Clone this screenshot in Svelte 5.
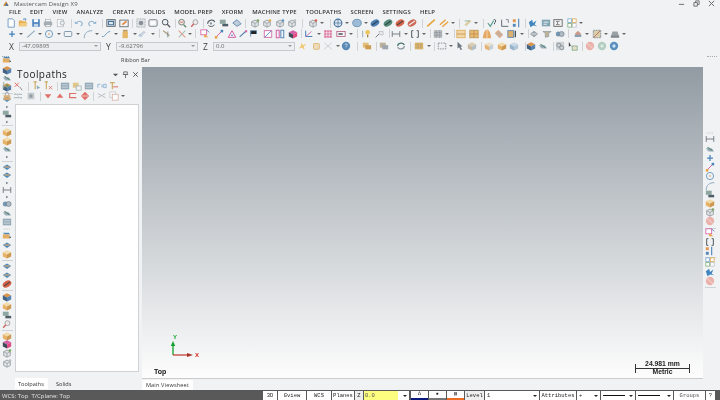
<script>
  // small icon helpers, all drawn on a 12x12 box
  const cube = (t, l, r) =>
    `<path d="M6 1.5 11 4 6 6.5 1 4z" fill="${t}"/><path d="M1 4 6 6.5V11.5L1 9z" fill="${l}"/><path d="M11 4 6 6.5V11.5L11 9z" fill="${r}"/>`;
  const wire = (c) =>
    `<path d="M2 4.5 6 2.5 10 4.5V9L6 11 2 9z" fill="#dfe3e6" stroke="#6d767c" stroke-width=".8"/><path d="M2 4.5 6 6.5 10 4.5M6 6.5V11" fill="none" stroke="#6d767c" stroke-width=".7"/><circle cx="9.5" cy="3" r="1.6" fill="${c}"/>`;
  const disk = (a, b) =>
    `<ellipse cx="6" cy="6" rx="5.5" ry="3.8" transform="rotate(-28 6 6)" fill="${a}"/><path d="M2.5 8.5 9.5 3.5" stroke="${b}" stroke-width="1.4"/>`;
  const ln = (c, w = 1.2) => `fill="none" stroke="${c}" stroke-width="${w}"`;

  const icons = {
    doc: `<path d="M2.5 1H8L10 3V11H2.5z" fill="#fff" stroke="#4d7fae"/>`,
    folder: `<path d="M1 3H5L6 4H10V10H1z" fill="#e4a83c"/><path d="M3 6H11.5L10 10H1z" fill="#f2c66d"/><path d="M6 1.5 9.5 1 9 3" ${ln("#3f77ad")}/>`,
    save: `<rect x="1.5" y="1.5" width="9" height="9" fill="#2f6fb5"/><rect x="3.5" y="1.5" width="5" height="3.5" fill="#fff"/><rect x="3.5" y="7" width="5" height="3.5" fill="#bcd3e8"/>`,
    print: `<rect x="3" y="1.5" width="6" height="3" fill="#fff" stroke="#8b9399" stroke-width=".7"/><rect x="1" y="4.5" width="10" height="4.5" fill="#9aa2a8"/><rect x="3" y="8" width="6" height="2.5" fill="#eee" stroke="#8b9399" stroke-width=".7"/>`,
    prev: `<rect x="1.5" y="2" width="7.5" height="8.5" fill="#fafafa" stroke="#a7adb2" stroke-width=".8"/><circle cx="7.5" cy="6" r="2.5" fill="#e8eef2" stroke="#8f979d" stroke-width=".9"/>`,
    undo: `<path d="M3 6.5C4 3 9 3 10 6.5 10 8 9 9 8 9.5" ${ln("#7ba4c7", 1.3)}/><path d="M1 4 5 7H1z" fill="#7ba4c7"/>`,
    redo: `<path d="M9 6.5C8 3 3 3 2 6.5 2 8 3 9 4 9.5" ${ln("#7ba4c7", 1.3)}/><path d="M11 4 7 7H11z" fill="#7ba4c7"/>`,
    fit: `<rect x="1" y="2" width="10" height="8" fill="#dfe7ee" stroke="#333c46"/><path d="M3 4H9V8H3z" ${ln("#27608f", 1.3)}/>`,
    fit2: `<rect x="1" y="2.5" width="10" height="8" fill="#f4f4f4" stroke="#444c54"/><path d="M4 8 9 4" stroke="#e0701e" stroke-width="2"/>`,
    gear: `<rect x="1" y="1" width="10" height="10" fill="#dde0e2" stroke="#848b90" stroke-dasharray="1 1"/><circle cx="6" cy="6" r="2.8" fill="#76808a"/>`,
    win: `<rect x="1" y="2" width="10" height="8" rx="1.5" fill="#e6eaec" stroke="#5c666e"/><rect x="3" y="4" width="6" height="4" fill="#fff"/>`,
    mag: `<circle cx="5" cy="5" r="3.4" fill="#eef1f3" stroke="#37414a" stroke-width="1.2"/><path d="M7.5 7.5 11 11" stroke="#37414a" stroke-width="1.6"/>`,
    cyc: `<circle cx="5.5" cy="5" r="3.4" fill="#f0e4e0" stroke="#5a6a5e" stroke-width="1.1"/><path d="M8 8 11 11" stroke="#4a7a56" stroke-width="1.6"/><path d="M3.5 5H7.5" stroke="#c9503c"/>`,
    magr: `<circle cx="6.5" cy="5" r="3" fill="#efe6e6" stroke="#8b8f93"/><path d="M4.5 7 1.5 10.5" stroke="#c8504a" stroke-width="1.8"/>`,
    rot: `<path d="M2 7C2 2 9 1 10.5 5" ${ln("#2f3a42", 1.3)}/><path d="M3 9C5 11 9 10.5 10 8" ${ln("#2f3a42", 1.1)}/><circle cx="6" cy="6.5" r="1.4" fill="#7a8790"/>`,
    view2: `<rect x="1" y="2" width="7" height="5" fill="#7f9a93"/><path d="M4 7H11V10H4z" fill="#34444e"/>`,
    view3: `<path d="M1 6 6 2 11 7 6 10z" fill="#b8c8d8" stroke="#3f6f9d"/>`,
    w1: wire("#6a9a4a"), w2: wire("#e0a030"), w3: wire("#4c88bf"), w4: wire("#b0b6bb"),
    wred: wire("#d04a3c"),
    globe: `<circle cx="6" cy="6" r="4.6" fill="#d6e2ec" stroke="#2f5f8f" stroke-width="1.4"/><path d="M1.4 6H10.6M6 1.4V10.6" stroke="#2f5f8f" stroke-width=".8"/>`,
    sphere: `<ellipse cx="6" cy="6" rx="5.2" ry="4.4" fill="#8fb2d2" stroke="#4e7fa8"/>`,
    dblue: disk("#2f6aa8", "#102a44"), dgreen: disk("#3c7a64", "#16322a"),
    dred: disk("#d2492c", "#3a2a28"), dred2: disk("#c9503c", "#e9e9e9"),
    oline: `<path d="M1.5 10 10.5 2" stroke="#e8951c" stroke-width="1.8"/>`,
    oline2: `<path d="M1 8 8 2M4 10.5 11 4.5" stroke="#e8951c" stroke-width="1.7"/>`,
    tan: `<path d="M1.5 8 7 2.5 10.5 3.5 4 10z" fill="#dcc79a"/><path d="M2 3.5H8" stroke="#6fa287"/>`,
    chk: `<path d="M1 6 4 10 8 3" ${ln("#3f8f82", 1.4)}/><path d="M8 2C11 1 11 5 9 6V7.5" ${ln("#39424a")}/>`,
    ang: `<path d="M2 2V10H10" ${ln("#4d5a66")}/><path d="M7 2H10V6" ${ln("#4d5a66", .9)}/>`,
    dist: `<rect x="1" y="1.5" width="3.5" height="3.5" fill="#e2872f"/><rect x="1" y="7" width="3.5" height="3.5" fill="#3b77b0"/><path d="M8 1V11" stroke="#3b77b0" stroke-width="1.4"/>`,
    chart: `<path d="M1 5 5 2 6 6 10 3 8 8 11 10 6 9 3 11z" fill="#2273b6"/>`,
    calc: `<rect x="1" y="2" width="10" height="8" fill="#6f98a8"/><path d="M3 5H9M3 7.5H7" stroke="#fff"/>`,
    sigma: `<rect x="1" y="2" width="10" height="8" fill="#f2f2f2" stroke="#444"/><path d="M8 4H4L6 6 4 8H8" ${ln("#333", .8)}/>`,
    grid4: `<rect x="1" y="1" width="4.5" height="4.5" fill="#fff" stroke="#6fa0c8"/><rect x="6.5" y="1" width="4.5" height="4.5" fill="#fff" stroke="#d9a040"/><rect x="1" y="6.5" width="4.5" height="4.5" fill="#fff" stroke="#70a868"/><rect x="6.5" y="6.5" width="4.5" height="4.5" fill="#fff" stroke="#b8bcc0"/>`,
    plus: `<path d="M6 2.5V9.5M2.5 6H9.5" stroke="#2a6fb0" stroke-width="1.5"/>`,
    line: `<path d="M1.5 10 10.5 2" stroke="#7d9ab5" stroke-width="1.3"/>`,
    circle: `<circle cx="6" cy="6" r="4.3" ${ln("#5f8fb8")}/><circle cx="6" cy="6" r=".9" fill="#d0781f"/>`,
    rect: `<rect x="1.5" y="3" width="9" height="6" rx="1" ${ln("#6f8da8")}/>`,
    arc: `<path d="M1.5 11C1.5 5 5 2 11 2" ${ln("#7d9ab5")}/>`,
    spl: `<path d="M1 9C4 10 5 7 6 6S9 3 11 3" ${ln("#5f8fb8")}/>`,
    fill: `<rect x="3" y="3" width="6.5" height="8" fill="#e3ae4f"/><rect x="3.5" y="1" width="5.5" height="2" fill="#b5853a"/>`,
    eras: `<path d="M1 8 8 2 11 4 4 10z" fill="#c2cfdc"/><path d="M3 6 6 9" stroke="#8aa0b5"/>`,
    trim: `<path d="M1.5 2 9 8" stroke="#a29064" stroke-width="1.5"/><path d="M7 3V10" stroke="#5d6a74"/>`,
    xcut: `<path d="M2 10 10 2" stroke="#9ab8a8" stroke-width="1.3"/><path d="M2 2 10 10" stroke="#dd8a7a" stroke-width="1.3"/>`,
    pk1: `<rect x="1" y="1" width="7" height="6" fill="#fff" stroke="#d0479a"/><path d="M5 6 10 10H5z" fill="#e8951c"/><path d="M8 1 11 4" stroke="#2a6fb0"/>`,
    pk2: `<path d="M2 10 9 3" stroke="#d0479a" stroke-width="1.2"/><rect x="8" y="1" width="3" height="3" fill="#2a6fb0"/><rect x="1" y="8.5" width="3" height="3" fill="#e8951c"/>`,
    pk3: `<path d="M1.5 10 6 2 10.5 10z" ${ln("#d0479a")}/><circle cx="6" cy="7.5" r="1" fill="#2a6fb0"/>`,
    pk4: `<rect x="1.5" y="2" width="9" height="8" fill="#fff" stroke="#d0479a"/><path d="M2 10 10 2" stroke="#2a6fb0"/>`,
    pk5: `<path d="M2 9.5 9 3" stroke="#3a6f9f" stroke-width="1.3"/><rect x="8.5" y="1.5" width="2.5" height="2.5" fill="#d0479a"/>`,
    pk6: `<rect x="1.5" y="1.5" width="3.5" height="9" ${ln("#d0479a")}/><rect x="7" y="1.5" width="3.5" height="9" ${ln("#3b77b0")}/>`,
    pk7: cube("#d0479a", "#20303c", "#e03070"),
    ax: `<path d="M2 2V9H10" ${ln("#2a6fb0")}/><path d="M2 9 9 3" stroke="#d0479a"/>`,
    hatch: `<rect x="1.5" y="1.5" width="9" height="9" fill="#d85a8c"/><path d="M1.5 4.5H10.5M1.5 7.5H10.5M4.5 1.5V10.5M7.5 1.5V10.5" stroke="#f5e6ee" stroke-width=".9"/>`,
    box: `<rect x="1" y="3" width="10" height="6" fill="#f5f5f5" stroke="#b0476c"/><rect x="3" y="5" width="5" height="2" fill="#3d4a55"/>`,
    bulb: `<circle cx="8" cy="4" r="2.8" fill="#edbb44"/><path d="M8 7V10" stroke="#8a6b20" stroke-width="1.6"/><path d="M2 2V10" stroke="#8fa0ad" stroke-width="1.2"/>`,
    note: `<path d="M6 3H11V7H7z" fill="#e8e8e8" stroke="#9ca3a8" stroke-width=".7"/><path d="M2 10 6 6" stroke="#5c666e" stroke-width="1.2"/>`,
    dim: `<path d="M1.5 2.5V9.5M10.5 2.5V9.5M1.5 6H10.5" stroke="#4c565e" stroke-width="1"/>`,
    brk: `<path d="M4 2H2V10H4M8 2H10V10H8" ${ln("#39424a")}/>`,
    hch2: `<rect x="1" y="1.5" width="10" height="9" fill="#a9afb3"/><path d="M1 4.5H11M1 7.5H11M4 1.5V10.5M8 1.5V10.5" stroke="#6b7278" stroke-width=".9" stroke-dasharray="1 1"/>`,
    tbl: `<rect x="1" y="1.5" width="10" height="9" fill="#e3b25e" stroke="#b5853a"/><path d="M1 6H11M6 1.5V10.5" stroke="#c07a2a"/>`,
    tbl2: `<rect x="1" y="1.5" width="10" height="9" fill="#f2d39a" stroke="#d9a040"/><path d="M1 6H11" stroke="#c07a2a"/>`,
    arch: `<path d="M1 11C2 3 4 1 6 1S10 3 11 11z" fill="#e59a4a"/><path d="M6 1V11" stroke="#f6dcae"/>`,
    stair: `<path d="M1 5 5 1 11 7 7 11z" fill="#dba27a"/><path d="M3 7 7 3M5 9 9 5" stroke="#8aa0b5"/>`,
    tb: `<rect x="1" y="2" width="7" height="8" fill="#d9a65a" stroke="#3f6f9d"/><path d="M10 2V10" stroke="#2a3640" stroke-width="1.6"/>`,
    gd: `<path d="M1 6 6 2 11 6 6 10z" fill="#8b969e"/><path d="M3 6H9" stroke="#efefef"/>`,
    gd2: `<path d="M1 3H11L8 5V9L4 10V5z" fill="#b7a98a" stroke="#6e7c86" stroke-width=".7"/>`,
    gd3: `<circle cx="4" cy="6" r="3" fill="#5f87a8"/><circle cx="8" cy="6" r="3" fill="#a7b1b8" stroke="#3f5f78" stroke-width=".7"/>`,
    st: `<path d="M2 6 6 2 10 6 6 10z" fill="#c88a78"/><rect x="2" y="7" width="8" height="2.5" fill="#7390aa"/>`,
    st2: `<rect x="1.5" y="1.5" width="9" height="9" fill="#d8c89f" stroke="#5c7488" stroke-dasharray="2 1"/><path d="M2 10 10 2" stroke="#b0503c"/>`,
    st3: `<path d="M3 3H9L11 9H1z" fill="#8a939a"/><rect x="1" y="8" width="10" height="2.5" fill="#6b757c"/>`,
    star: `<path d="M4 2 6 5 10 3 7 7 8 11 5 8 1 9 3.5 6z" fill="#f0c060"/>`,
    bx: `<rect x="3" y="3" width="7" height="7" rx="1" fill="#eed9b0" stroke="#d8a85a"/>`,
    xg: `<path d="M1.5 2 10.5 10M10.5 2 1.5 10" stroke="#b9c2c6" stroke-width="1"/>`,
    help: `<circle cx="6" cy="6" r="5" fill="#3f78ad"/><path d="M4.5 4.5C5 3 8 3 7.5 5 7 6 6 6 6 7.5" ${ln("#e6eef5", .9)}/>`,
    fold2: `<rect x="1" y="2" width="7" height="6" fill="#e0b563"/><rect x="4" y="5" width="7" height="5" fill="#c88f35"/>`,
    fold3: `<rect x="1" y="2" width="7" height="6" fill="#b3a58a"/><rect x="4" y="5" width="7" height="5" fill="#8f99a2"/>`,
    cyc2: `<path d="M2 6C2 2 9 1 10 5" ${ln("#2f5f58", 1.5)}/><path d="M10 6C10 10 3 11 2 7" ${ln("#7c8a94", 1.5)}/>`,
    hb: `<rect x="1" y="2" width="10" height="8" fill="#d9a84f"/><path d="M1 4.5H11M1 7.5H11M4.5 2V10M8 2V10" stroke="#8f8060" stroke-width=".7" stroke-dasharray="1 1"/>`,
    dash: `<rect x="1.5" y="2.5" width="9" height="7" fill="#eef0f2" stroke="#6a737a" stroke-dasharray="2 1"/>`,
    arrow: `<path d="M3 1 3 9 5 7.5 7 11 8.5 10 6.5 7 9 6.5z" fill="#59636b"/>`,
    tanbox: cube("#d8c8a8", "#c2b090", "#a8b4bc"),
    b1: cube("#eadbc0", "#e5a75a", "#bfc8ce"),
    b2: cube("#f2d79e", "#e6a84e", "#c88a35"),
    b3: cube("#c3d5e4", "#8aa9c4", "#a7bfd3"),
    b4: cube("#d6842e", "#25496e", "#3b6fa5"),
    bl: `<path d="M1 6 6 3 11 6 6 9.5z" fill="#3478b4"/><path d="M3 6H9" stroke="#e2a04a" stroke-width="1.4"/>`,
    blo: `<path d="M1 4H9V9H1z" fill="#e3a14c"/><path d="M1 2H8L10 4H3z" fill="#3478b4"/><path d="M9 6 11 7.5 9 9z" fill="#222"/>`,
    sh: `<path d="M1 5H8L11 9H4z" fill="#8da4b5"/><path d="M3 4 9 8" stroke="#4f7a6a" stroke-width="1.4"/>`,
    ring1: `<circle cx="6" cy="6" r="5" fill="#eba7a0"/><path d="M2.5 3 9.5 9" stroke="#f6d9d6"/>`,
    ring2: `<circle cx="6" cy="6" r="5" fill="#a9c8b8"/><circle cx="6" cy="6" r="2" fill="#d8e7df"/>`,
    hblu: `<circle cx="6" cy="6" r="5" fill="#3f7fb8"/><circle cx="6" cy="6" r="2" fill="#c9dff0"/>`,
    gear2: `<rect x="1" y="1" width="10" height="10" fill="#c6ccd0"/><circle cx="4.5" cy="5" r="2.4" ${ln("#7d868c")}/><circle cx="8" cy="8" r="2.4" ${ln("#7d868c")}/>`,
    arr2: `<path d="M1 1 1 7 3 5.5 5 8z" fill="#222"/><rect x="5" y="6" width="6" height="5" fill="#e6dbc0" stroke="#6f9f7a"/>`,
    dnr: `<path d="M2 4H10L6 9z" fill="#dc5a50"/>`,
    upr: `<path d="M2 8H10L6 3z" fill="#dc5a50"/>`,
    lpr: `<path d="M10 3H2V8H10" ${ln("#dc5a50", 1.4)}/>`,
    dmr: `<path d="M6 1 11 6 6 11 1 6z" fill="#dc5a50"/><path d="M2 6H10" stroke="#f4d4d0"/>`,
    tp1: `<path d="M2 1V9" stroke="#9fb4a2" stroke-width="1.5"/><path d="M5 3 9 6 5 8z" fill="#5e9a70"/><path d="M8 8 11 11" stroke="#5c666e"/>`,
    tp2: `<path d="M2 2 7 7M7 2 2 7" stroke="#dc5a50" stroke-width="1.2"/><path d="M8 7 11 11" stroke="#5c666e"/>`,
    tp3: `<path d="M3 1H7M5 1V10" stroke="#c8a050" stroke-width="1.4"/><path d="M7 5 11 8 7 10z" fill="#7fa4b8"/>`,
    tp4: `<path d="M2 1H6M4 1V10" stroke="#c8a050" stroke-width="1.4"/><path d="M7 6 11 10M11 6 7 10" stroke="#dc5a50"/>`,
    lst: `<rect x="1" y="2" width="10" height="8" fill="#7f98a8"/><path d="M2 4H10M2 6H10M2 8H10" stroke="#dde6ec" stroke-width=".7"/>`,
    lst2: `<rect x="1" y="2" width="7" height="6" fill="#e0c078"/><rect x="5" y="6" width="6" height="5" fill="#f4f4f4" stroke="#9aa"/>`,
    g1: `<path d="M1 8V4H4M6 4V8" ${ln("#7ea6cf", 1.1)}/><path d="M8 4H11V8H8z" ${ln("#7ea6cf", 1.1)}/>`,
    tl: `<path d="M1 2H7M4 2V10" stroke="#c8a050" stroke-width="1.4"/><path d="M5 7H11" stroke="#dc5a50" stroke-width="1.2"/>`,
    lock: `<rect x="2" y="5" width="8" height="6" fill="#d8a86a"/><path d="M4 5V3C4 1 8 1 8 3V5" ${ln("#9a9fa3")}/>`,
    lk2: `<path d="M1 4H11M1 8H11" stroke="#aeb8bf" stroke-width="1.4"/><path d="M2 2 10 10" stroke="#c6ccd0"/>`,
    lk3: `<rect x="2" y="2" width="8" height="8" fill="#bcc2c6"/><circle cx="6" cy="6" r="2" fill="#848c92"/>`,
    sc: `<path d="M1 3 10 8M1 8 10 3" stroke="#b4babe" stroke-width="1.2"/>`,
    cp: `<rect x="1" y="1" width="7" height="7" fill="#f5f5f5" stroke="#c3c9cd"/><rect x="4" y="4" width="7" height="7" fill="#fff" stroke="#d8a8a0"/>`,
    s1: `<path d="M2 6V2H9V6M2 2V9" stroke="#3b6f9d" stroke-width="1"/>`,
    dots: `<path d="M2 6H10" stroke="#a8aeb3" stroke-dasharray="1 1.2"/>`,
    tick: `<path d="M5 4.5 7.5 6 5 7.5z" fill="#4c565e"/>`,
  };

  // rows hold [centre x, kind]; "|" is a separator, "v" a small drop arrow
  const row1 = [[11,"doc"],[23,"folder"],[36,"save"],[48,"print"],[61,"prev"],[71,"|"],[79,"undo"],[92,"redo"],[102,"|"],[111,"fit"],[124,"fit2"],[132,"|"],[141,"gear"],[153,"win"],[166,"mag"],[175,"|"],[182,"cyc"],[195,"magr"],[203,"|"],[211,"rot"],[224,"view2"],[237,"view3"],[245,"|"],[255,"w1"],[267,"w2"],[280,"w3"],[292,"w4"],[302,"|"],[313,"wred"],[322,"v"],[331,"|"],[339,"globe"],[348,"v"],[359,"sphere"],[368,"v"],[378,"dblue"],[391,"dgreen"],[403,"dred"],[415,"dred2"],[425,"|"],[434,"oline"],[447,"oline2"],[456,"v"],[463,"|"],[472,"tan"],[480,"v"],[488,"|"],[497,"chk"],[510,"ang"],[522,"dist"],[530,"|"],[538,"chart"],[551,"calc"],[563,"sigma"],[577,"grid4"],[586,"v"]];
  const row2 = [[12,"plus"],[21,"v"],[32,"line"],[41,"v"],[51,"circle"],[61,"v"],[71,"rect"],[81,"v"],[92,"arc"],[101,"v"],[111,"spl"],[121,"v"],[131,"fill"],[141,"v"],[149,"eras"],[160,"v"],[167,"|"],[175,"trim"],[190,"xcut"],[198,"v"],[204,"|"],[214,"pk1"],[228,"pk2"],[241,"pk3"],[252,"pk5"],[263,"s1"],[277,"pk4"],[289,"pk6"],[302,"pk7"],[310,"|"],[318,"ax"],[328,"v"],[338,"hatch"],[351,"box"],[361,"v"],[368,"|"],[377,"bulb"],[390,"note"],[400,"|"],[407,"dim"],[417,"v"],[427,"brk"],[436,"v"],[443,"|"],[451,"hch2"],[460,"v"],[468,"|"],[475,"tbl2"],[488,"tbl"],[501,"arch"],[513,"stair"],[526,"tb"],[536,"v"],[543,"|"],[549,"gd"],[562,"gd2"],[575,"gd3"],[583,"|"],[593,"st"],[602,"v"],[613,"st2"],[622,"v"],[632,"st3"],[641,"v"]];
  const row3 = [[303,"star"],[316,"bx"],[328,"xg"],[338,"v"],[347,"help"],[358,"|"],[368,"fold2"],[377,"|"],[385,"fold3"],[402,"cyc2"],[411,"|"],[420,"hb"],[430,"v"],[436,"|"],[444,"dash"],[453,"v"],[463,"arrow"],[475,"tanbox"],[484,"|"],[492,"b1"],[505,"b2"],[517,"b3"],[528,"|"],[534,"b4"],[546,"sh"],[556,"|"],[563,"gear2"],[576,"arr2"],[585,"|"],[593,"ring1"],[605,"ring2"],[617,"hblu"]];

  const panel1 = [[22,"tp1"],[33,"tp2"],[43,"|"],[51,"tp3"],[63,"tp4"],[72,"|"],[80,"lst"],[92,"lst2"],[104,"lst"],[117,"g1"],[129,"tl"]];
  const panel2 = [[22,"lock"],[33,"lk2"],[46,"lk3"],[55,"|"],[63,"dnr"],[75,"upr"],[88,"lpr"],[100,"dmr"],[108,"|"],[117,"sc"],[129,"cp"],[138,"v"]];

  // vertical strips: [centre y, kind]
  const leftStrip = [[60,"blo"],[70,"b4"],[78,"sh"],[87,"b4"],[93,"_"],[99,"bl"],[107,"tick"],[114,"view2"],[122,"tick"],[125,"_"],[132,"b2"],[141,"b2"],[149,"sh"],[157,"tick"],[161,"_"],[167,"bl"],[175,"bl"],[183,"tick"],[190,"dim"],[197,"tick"],[204,"gd3"],[213,"sh"],[222,"lst"],[229,"dots"],[236,"blo"],[245,"bl"],[254,"b2"],[260,"_"],[266,"bl"],[275,"bl"],[284,"dred"],[290,"_"],[297,"b4"],[306,"b2"],[315,"view2"],[324,"magr"],[330,"_"],[336,"b2"],[344,"pk7"],[353,"w1"],[363,"w4"]];
  const rightStrip = [[133,"dots"],[139,"dim"],[149,"sh"],[158,"plus"],[167,"pk2"],[176,"circle"],[186,"arc"],[194,"view2"],[203,"b2"],[212,"w1"],[221,"ring1"],[228,"_"],[233,"pk1"],[242,"brk"],[251,"dist"],[257,"_"],[262,"grid4"],[272,"chart"],[281,"ring1"],[287,"_"]];

  const sizes = { "|": 1, "_": 1, v: 5 };
  const sizeOf = (kind) => sizes[kind] ?? 10;

  // turns centre positions into the gap before each item, so rows stay in flow
  function place(items, start = 0) {
    let end = start;
    return items.map(([at, kind]) => {
      const size = sizeOf(kind);
      const gap = at - size / 2 - end;
      end = at + size / 2;
      return { kind, gap, size };
    });
  }

  const menu = ["FILE","EDIT","VIEW","ANALYZE","CREATE","SOLIDS","MODEL PREP","XFORM","MACHINE TYPE","TOOLPATHS","SCREEN","SETTINGS","HELP"];
  const coords = [["X","-47.09895"],["Y","-9.62796"],["Z","0.0"]];
  const statusBtns = [["3D",14],["Gview",28],["WCS",24],["Planes",22]];
</script>

{#snippet strip(items, start, vertical)}
  {#each place(items, start) as it}
    {#if it.kind === "|" || it.kind === "_"}
      <i class={vertical ? "hsep" : "sep"} style={vertical ? `margin-top:${it.gap}px` : `margin-left:${it.gap}px`}></i>
    {:else if it.kind === "v"}
      <i class="drop" style={`margin-left:${it.gap}px`}></i>
    {:else}
      <svg class="ico" viewBox="0 0 12 12" style={vertical ? `margin-top:${it.gap}px` : `margin-left:${it.gap}px`}>{@html icons[it.kind]}</svg>
    {/if}
  {/each}
{/snippet}

<div class="app">
  <header class="top">
    <div class="title">
      <svg class="logo" viewBox="0 0 12 12"><path d="M1 10 6 2 11 10z" fill="#d9892f"/><path d="M4 10 7 5 10 10z" fill="#2f6fb5"/></svg>
      <span>Mastercam Design X9</span>
      <div class="winbtns">
        <svg viewBox="0 0 8 8"><path d="M1 5H7" stroke="#777" stroke-width="1.2"/></svg>
        <svg viewBox="0 0 8 8"><path d="M1 3H5V7H1zM3 3V1H7V5H5" fill="none" stroke="#666"/></svg>
        <svg viewBox="0 0 8 8"><path d="M1 1 7 7M7 1 1 7" stroke="#666" stroke-width="1.1"/></svg>
      </div>
    </div>
    <nav class="menu">
      {#each menu as m}<span>{m}</span>{/each}
    </nav>
    <div class="tools r1">{@render strip(row1, 0, false)}</div>
    <div class="tools r2">{@render strip(row2, 0, false)}</div>
    <div class="tools r3">
      {#each coords as [label, value]}
        <label class="coord">
          <b>{label}</b>
          <span class="field">{value}<i class="chev"></i></span>
        </label>
      {/each}
      {@render strip(row3, 295, false)}
    </div>
    <div class="ribbon">
      <span class="grip"></span>
      <span class="rib-label">Ribbon Bar</span>
      <span class="grip right"></span>
    </div>
  </header>

  <div class="body">
    <aside class="lstrip">{@render strip(leftStrip, 55, true)}</aside>

    <section class="panel">
      <div class="panel-head">
        <h2>Toolpaths</h2>
        <div class="panel-btns">
          <svg viewBox="0 0 8 8"><path d="M1 3H7L4 6z" fill="#555"/></svg>
          <svg viewBox="0 0 8 8"><path d="M2 1H6V4H2zM1 4H7M4 4V8" fill="none" stroke="#666"/></svg>
          <svg viewBox="0 0 8 8"><path d="M1.5 1.5 6.5 6.5M6.5 1.5 1.5 6.5" stroke="#555" stroke-width="1.1"/></svg>
        </div>
      </div>
      <div class="tools pr">{@render strip(panel1, 15, false)}</div>
      <div class="tools pr">{@render strip(panel2, 15, false)}</div>
      <div class="list"></div>
      <div class="tabs">
        <span class="on">Toolpaths</span>
        <span>Solids</span>
      </div>
    </section>

    <main class="center">
      <div class="view">
        <svg class="triad" viewBox="0 0 34 24">
          <path d="M6 21V10" stroke="#12a02c" stroke-width="1.3"/>
          <path d="M6 7 3.8 12H8.2z" fill="#12a02c"/>
          <path d="M6 21H23" stroke="#c2342a" stroke-width="1.2"/>
          <path d="M26 21 20 19V23z" fill="#a8322a"/>
        </svg>
        <span class="ax-y">Y</span>
        <span class="ax-x">X</span>
        <span class="plane">Top</span>
        <div class="scale">
          <span>24.981 mm</span>
          <span>Metric</span>
        </div>
      </div>
      <div class="sheet"><span>Main Viewsheet</span></div>
    </main>

    <aside class="rstrip">{@render strip(rightStrip, 67, true)}</aside>
  </div>

  <footer class="status">
    <span class="wcs">WCS: Top&nbsp; T/Cplane: Top</span>
    {#each statusBtns as [t, w]}
      <span class="btn" style={`width:${w}px`}>{t}</span>
    {/each}
    <span class="zlab">Z</span>
    <span class="zfield">0.0<i class="chev dark"></i></span>
    <span class="swatch first"><em>∆</em><i class="navy"></i></span>
    <span class="swatch"><em>●</em><i class="grey"></i></span>
    <span class="swatch"><em>▤</em><i class="orange"></i></span>
    <span class="btn lvl">Level</span>
    <span class="lvlfield">1<i class="chev dark"></i></span>
    <span class="btn attr">Attributes</span>
    <span class="lt plus">+<i class="chev dark"></i></span>
    <span class="lt thick"><i class="l2"></i><i class="chev dark"></i></span>
    <span class="lt thin"><i class="l1"></i><i class="chev dark"></i></span>
    <span class="btn groups">Groups</span>
    <span class="btn q">?</span>
  </footer>
</div>

<style>
  :global(body) {
    margin: 0;
    background: #f0f2f3;
  }

  .app {
    width: 720px;
    height: 400px;
    display: flex;
    flex-direction: column;
    overflow: hidden;
    background: #f0f2f3;
    font-family: "Open Sans", "Liberation Sans", sans-serif;
    color: #333;
    filter: blur(0.4px);
  }

  .top {
    height: 67px;
    flex: none;
  }

  .title {
    height: 7px;
    display: flex;
    align-items: center;
    gap: 4px;
    padding-left: 2px;
    font-size: 6px;
    letter-spacing: 0.18px;
    color: #555;
  }

  .logo {
    width: 8px;
    height: 7px;
  }

  .winbtns {
    margin-left: auto;
    display: flex;
    gap: 8px;
    padding-right: 5px;

    svg {
      width: 7px;
      height: 7px;
    }
  }

  .menu {
    height: 10px;
    display: flex;
    align-items: center;
    gap: 9px;
    padding-left: 9px;
    font-size: 5.9px;
    letter-spacing: 0.17px;
    color: #333;
    font-weight: 600;
  }

  .tools {
    display: flex;
    align-items: center;
  }

  .r1 { height: 12px; }
  .r2 { height: 9px; }
  .r3 { height: 14px; margin-top: 1px; }
  .pr { height: 10px; }

  .ico {
    width: 10px;
    height: 10px;
    flex: none;
    opacity: 0.85;
  }

  .sep {
    width: 1px;
    height: 9px;
    background: #d0d3d6;
    flex: none;
  }

  .hsep {
    display: block;
    height: 1px;
    width: 11px;
    background: #d0d3d6;
    flex: none;
  }

  .drop {
    width: 0;
    height: 0;
    flex: none;
    border: 2.5px solid transparent;
    border-top: 2.5px solid #666;
    border-bottom: 0;
  }

  .coord {
    display: flex;
    align-items: center;
    width: 97px;
    padding-left: 5px;
    box-sizing: border-box;
    gap: 3px;

    b {
      font-size: 8.5px;
      font-weight: 400;
      color: #444;
      width: 7px;
    }
  }

  .coord:first-child {
    width: 101px;
    padding-left: 9px;
  }

  .field {
    flex: 1;
    height: 9px;
    border: 1px solid #c6cacd;
    background: #eceef0;
    box-sizing: border-box;
    display: flex;
    align-items: center;
    padding-left: 2px;
    font-size: 6px;
    color: #666;
  }

  .chev {
    width: 0;
    height: 0;
    border: 2px solid transparent;
    border-top: 2px solid #999;
    border-bottom: 0;
    margin-left: auto;
    margin-right: 2px;
  }

  .chev.dark {
    border-top-color: #222;
  }

  .ribbon {
    height: 14px;
    display: flex;
    align-items: center;
    font-size: 5.6px;
    color: #444;
  }

  .grip {
    width: 7px;
    height: 1px;
    margin-left: 2px;
    margin-top: -6px;
    border-top: 1px dotted #aaa;
  }

  .grip.right {
    margin-left: auto;
    margin-right: 3px;
    width: 10px;
  }

  .rib-label {
    margin-left: 112px;
  }

  .body {
    flex: 1;
    min-height: 0;
    display: flex;
  }

  .lstrip {
    width: 14px;
    flex: none;
    margin-top: -12px;
    display: flex;
    flex-direction: column;
    align-items: center;
  }

  .panel {
    width: 127px;
    flex: none;
    display: flex;
    flex-direction: column;
    padding-left: 1px;
    box-sizing: border-box;
  }

  .panel-head {
    height: 14px;
    display: flex;
    align-items: center;
    justify-content: space-between;
    padding: 0 2px;

    h2 {
      margin: 0;
      font-size: 10px;
      font-weight: 400;
      letter-spacing: 0.45px;
      color: #222;
    }
  }

  .panel-btns {
    display: flex;
    gap: 3px;

    svg {
      width: 7px;
      height: 7px;
    }
  }

  .panel .tools {
    margin-left: -15px;
  }

  .list {
    flex: 1;
    width: 124px;
    margin-top: 3px;
    background: #fff;
    border: 1px solid #cfd3d6;
    box-sizing: border-box;
  }

  .tabs {
    height: 18px;
    display: flex;
    align-items: flex-start;
    padding-top: 6px;
    box-sizing: border-box;
    font-size: 5.6px;
    gap: 6px;
    color: #333;

    span {
      height: 11px;
      display: flex;
      align-items: center;
      padding: 0 2px;
    }

    .on {
      background: #fff;
      padding: 0 3px;
      width: 27px;
    }
  }

  .center {
    flex: 1;
    min-width: 0;
    display: flex;
    flex-direction: column;
    padding-left: 1px;
  }

  .view {
    flex: 1;
    position: relative;
    background: linear-gradient(#929ba3 0%, #fdfdfd 100%);
    border-bottom: 1px solid #ccc;
  }

  .triad {
    position: absolute;
    left: 25px;
    top: 267px;
    width: 34px;
    height: 24px;
  }

  .ax-y,
  .ax-x {
    position: absolute;
    font: 700 6px "Liberation Sans", sans-serif;
  }

  .ax-y {
    left: 31px;
    top: 267px;
    color: #12a02c;
  }

  .ax-x {
    left: 53px;
    top: 285px;
    color: #d62a1e;
  }

  .plane {
    position: absolute;
    left: 12px;
    top: 301px;
    font: 700 7px "Liberation Sans", sans-serif;
    color: #111;
  }

  .scale {
    position: absolute;
    left: 493px;
    top: 297px;
    width: 53px;
    height: 9px;
    border: 1px solid #333;
    border-width: 0 1px;
    display: flex;
    flex-direction: column;
    align-items: center;
    font: 700 6.8px/6px "Liberation Sans", sans-serif;
    color: #222;

    span:first-child {
      border-bottom: 1px solid #333;
      width: 100%;
      text-align: center;
      height: 7px;
      margin-top: -3px;
      flex: none;
    }
  }

  .sheet {
    height: 11px;
    font-size: 5.6px;
    display: flex;
    align-items: flex-end;

    span {
      background: #fff;
      height: 10px;
      width: 51px;
      display: flex;
      align-items: center;
      justify-content: center;
      letter-spacing: 0.15px;
    }
  }

  .rstrip {
    width: 17px;
    flex: none;
    display: flex;
    flex-direction: column;
    align-items: center;
    padding-right: 3px;
    box-sizing: border-box;
  }

  .status {
    height: 10px;
    flex: none;
    display: flex;
    align-items: stretch;
    gap: 1px;
    background: #595959;
    font: 5.5px "Liberation Mono", monospace;
    color: #222;
    padding: 1px 3px 0 0;
    box-sizing: border-box;
  }

  .wcs {
    width: 262px;
    padding-left: 2px;
    display: flex;
    align-items: center;
    color: #e4e4e4;
    font: 6px "Open Sans", sans-serif;
    flex: none;
    box-sizing: border-box;
  }

  .btn {
    background: #fff;
    display: flex;
    align-items: center;
    justify-content: center;
    flex: none;
  }

  .zlab {
    width: 8px;
    flex: none;
    background: #eee;
    display: flex;
    align-items: center;
    justify-content: center;
  }

  .zfield {
    width: 45px;
    flex: none;
    display: flex;
    align-items: center;
    padding-left: 1px;
    box-sizing: border-box;
    background: linear-gradient(90deg, #fdfd80 0 34px, #fff 34px);
    color: #555;
  }

  .swatch {
    width: 17px;
    flex: none;
    display: flex;
    flex-direction: column;
    align-items: center;
    justify-content: space-between;
    background: #fff;

    em {
      font-style: normal;
      font-size: 5px;
      line-height: 7px;
    }

    i {
      width: 100%;
      height: 2px;
    }
  }

  .swatch.first {
    margin-left: 1px;
  }

  .navy { background: #0a1a7a; }
  .grey { background: #777; }
  .orange { background: #ee6c22; }

  .lvl { width: 19px; background: #eee; }

  .lvlfield {
    width: 54px;
    flex: none;
    background: #fff;
    display: flex;
    align-items: center;
    padding-left: 2px;
    box-sizing: border-box;
  }

  .attr { width: 36px; }

  .lt {
    background: #fff;
    display: flex;
    align-items: center;
    flex: none;
    padding-left: 2px;
    box-sizing: border-box;
  }

  .plus { width: 23px; }
  .thick { width: 34px; }
  .thin { width: 37px; }

  .l2, .l1 {
    width: 22px;
    background: #111;
  }

  .l2 { height: 1.5px; }
  .l1 { height: 0.7px; }

  .groups { width: 31px; color: #555; }
  .q { width: 9px; }
</style>
